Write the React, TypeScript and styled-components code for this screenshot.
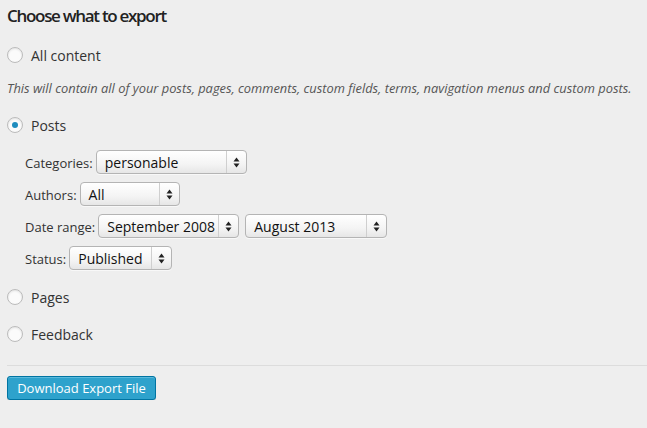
import styled, { createGlobalStyle } from 'styled-components';

const GlobalStyle = createGlobalStyle`
  html, body {
    margin: 0;
    padding: 0;
    background: #eeeeee;
    font-family: "Open Sans", "Liberation Sans", sans-serif;
    color: #333;
  }
`;

const Page = styled.div`
  padding: 4px 0 0 7px;
  width: 640px;
`;

const Title = styled.h2`
  margin: 0;
  font-size: 17px;
  line-height: 24px;
  font-weight: 600;
  letter-spacing: -1.3px;
  color: #222;
`;

const RadioRow = styled.label<{ $top: number }>`
  display: flex;
  align-items: center;
  gap: 8px;
  height: 22px;
  margin-top: ${({ $top }) => $top}px;
  font-size: 14px;
  color: #333;
`;

const RadioCircle = styled.span<{ $checked?: boolean }>`
  width: 16px;
  height: 16px;
  box-sizing: border-box;
  border-radius: 50%;
  border: 1px solid #bbb;
  background: #fbfbfb;
  box-shadow: inset 0 1px 2px rgba(0, 0, 0, 0.1);
  display: flex;
  align-items: center;
  justify-content: center;

  &::after {
    content: '';
    display: ${({ $checked }) => ($checked ? 'block' : 'none')};
    width: 6px;
    height: 6px;
    border-radius: 50%;
    background: #1e8cbe;
  }
`;

const Description = styled.p`
  margin: 13px 0 0;
  font-size: 12.85px;
  line-height: 18px;
  font-style: italic;
  color: #555;
  white-space: nowrap;
`;

const Filters = styled.div`
  display: flex;
  flex-direction: column;
  gap: 8px;
  margin: 14px 0 0 18px;
`;

const FilterRow = styled.div`
  display: flex;
  align-items: center;
  height: 24px;
`;

const Label = styled.span`
  font-size: 13px;
  color: #333;
  margin-right: 3px;
  padding-top: 2px;
`;

const SelectBox = styled.div<{ $width: number }>`
  width: ${({ $width }) => $width}px;
  height: 24px;
  box-sizing: border-box;
  display: flex;
  align-items: stretch;
  border: 1px solid #b4b4b4;
  border-radius: 4px;
  background: linear-gradient(#ffffff, #f4f4f4 60%, #e6e6e6);
  box-shadow: 0 1px 0 rgba(255, 255, 255, 0.6);
  margin-right: 6px;
`;

const SelectText = styled.span`
  flex: 1;
  display: flex;
  align-items: center;
  padding-left: 8px;
  font-size: 14px;
  color: #111;
  white-space: nowrap;
  overflow: hidden;
`;

const SelectArrows = styled.span`
  width: 19px;
  border-left: 1px solid #cfcfcf;
  display: flex;
  align-items: center;
  justify-content: center;
`;

const Divider = styled.hr`
  margin: 20px 0 0;
  border: 0;
  border-top: 1px solid #dcdcdc;
`;

const Button = styled.button`
  margin-top: 10px;
  height: 24px;
  padding: 0;
  width: 149px;
  border: 1px solid #0074a2;
  border-radius: 3px;
  background: #2ea2cc;
  box-shadow: inset 0 1px 0 rgba(120, 200, 230, 0.6), 0 1px 0 rgba(0, 0, 0, 0.15);
  color: #fff;
  font-family: "Open Sans", "Liberation Sans", sans-serif;
  font-size: 13px;
  line-height: 22px;
  white-space: nowrap;
  cursor: pointer;
`;

const Arrows = () => (
  <svg width="7" height="11" viewBox="0 0 7 11">
    <path d="M3.5 0.5 L6.5 4.5 L0.5 4.5 Z" fill="#222" />
    <path d="M3.5 10.5 L6.5 6.5 L0.5 6.5 Z" fill="#222" />
  </svg>
);

const Select = ({ value, width }: { value: string; width: number }) => (
  <SelectBox $width={width}>
    <SelectText>{value}</SelectText>
    <SelectArrows>
      <Arrows />
    </SelectArrows>
  </SelectBox>
);

const App = () => {
  return (
    <>
      <GlobalStyle />
      <Page>
        <Title>Choose what to export</Title>
        <RadioRow $top={16}>
          <RadioCircle />
          All content
        </RadioRow>
        <Description>
          This will contain all of your posts, pages, comments, custom fields, terms, navigation menus and custom posts.
        </Description>
        <RadioRow $top={17}>
          <RadioCircle $checked />
          Posts
        </RadioRow>
        <Filters>
          <FilterRow>
            <Label>Categories:</Label>
            <Select value="personable" width={151} />
          </FilterRow>
          <FilterRow>
            <Label>Authors:</Label>
            <Select value="All" width={100} />
          </FilterRow>
          <FilterRow>
            <Label>Date range:</Label>
            <Select value="September 2008" width={141} />
            <Select value="August 2013" width={142} />
          </FilterRow>
          <FilterRow>
            <Label>Status:</Label>
            <Select value="Published" width={103} />
          </FilterRow>
        </Filters>
        <RadioRow $top={16}>
          <RadioCircle />
          Pages
        </RadioRow>
        <RadioRow $top={15}>
          <RadioCircle />
          Feedback
        </RadioRow>
        <Divider />
        <Button>Download Export File</Button>
      </Page>
    </>
  );
};

export default App;
